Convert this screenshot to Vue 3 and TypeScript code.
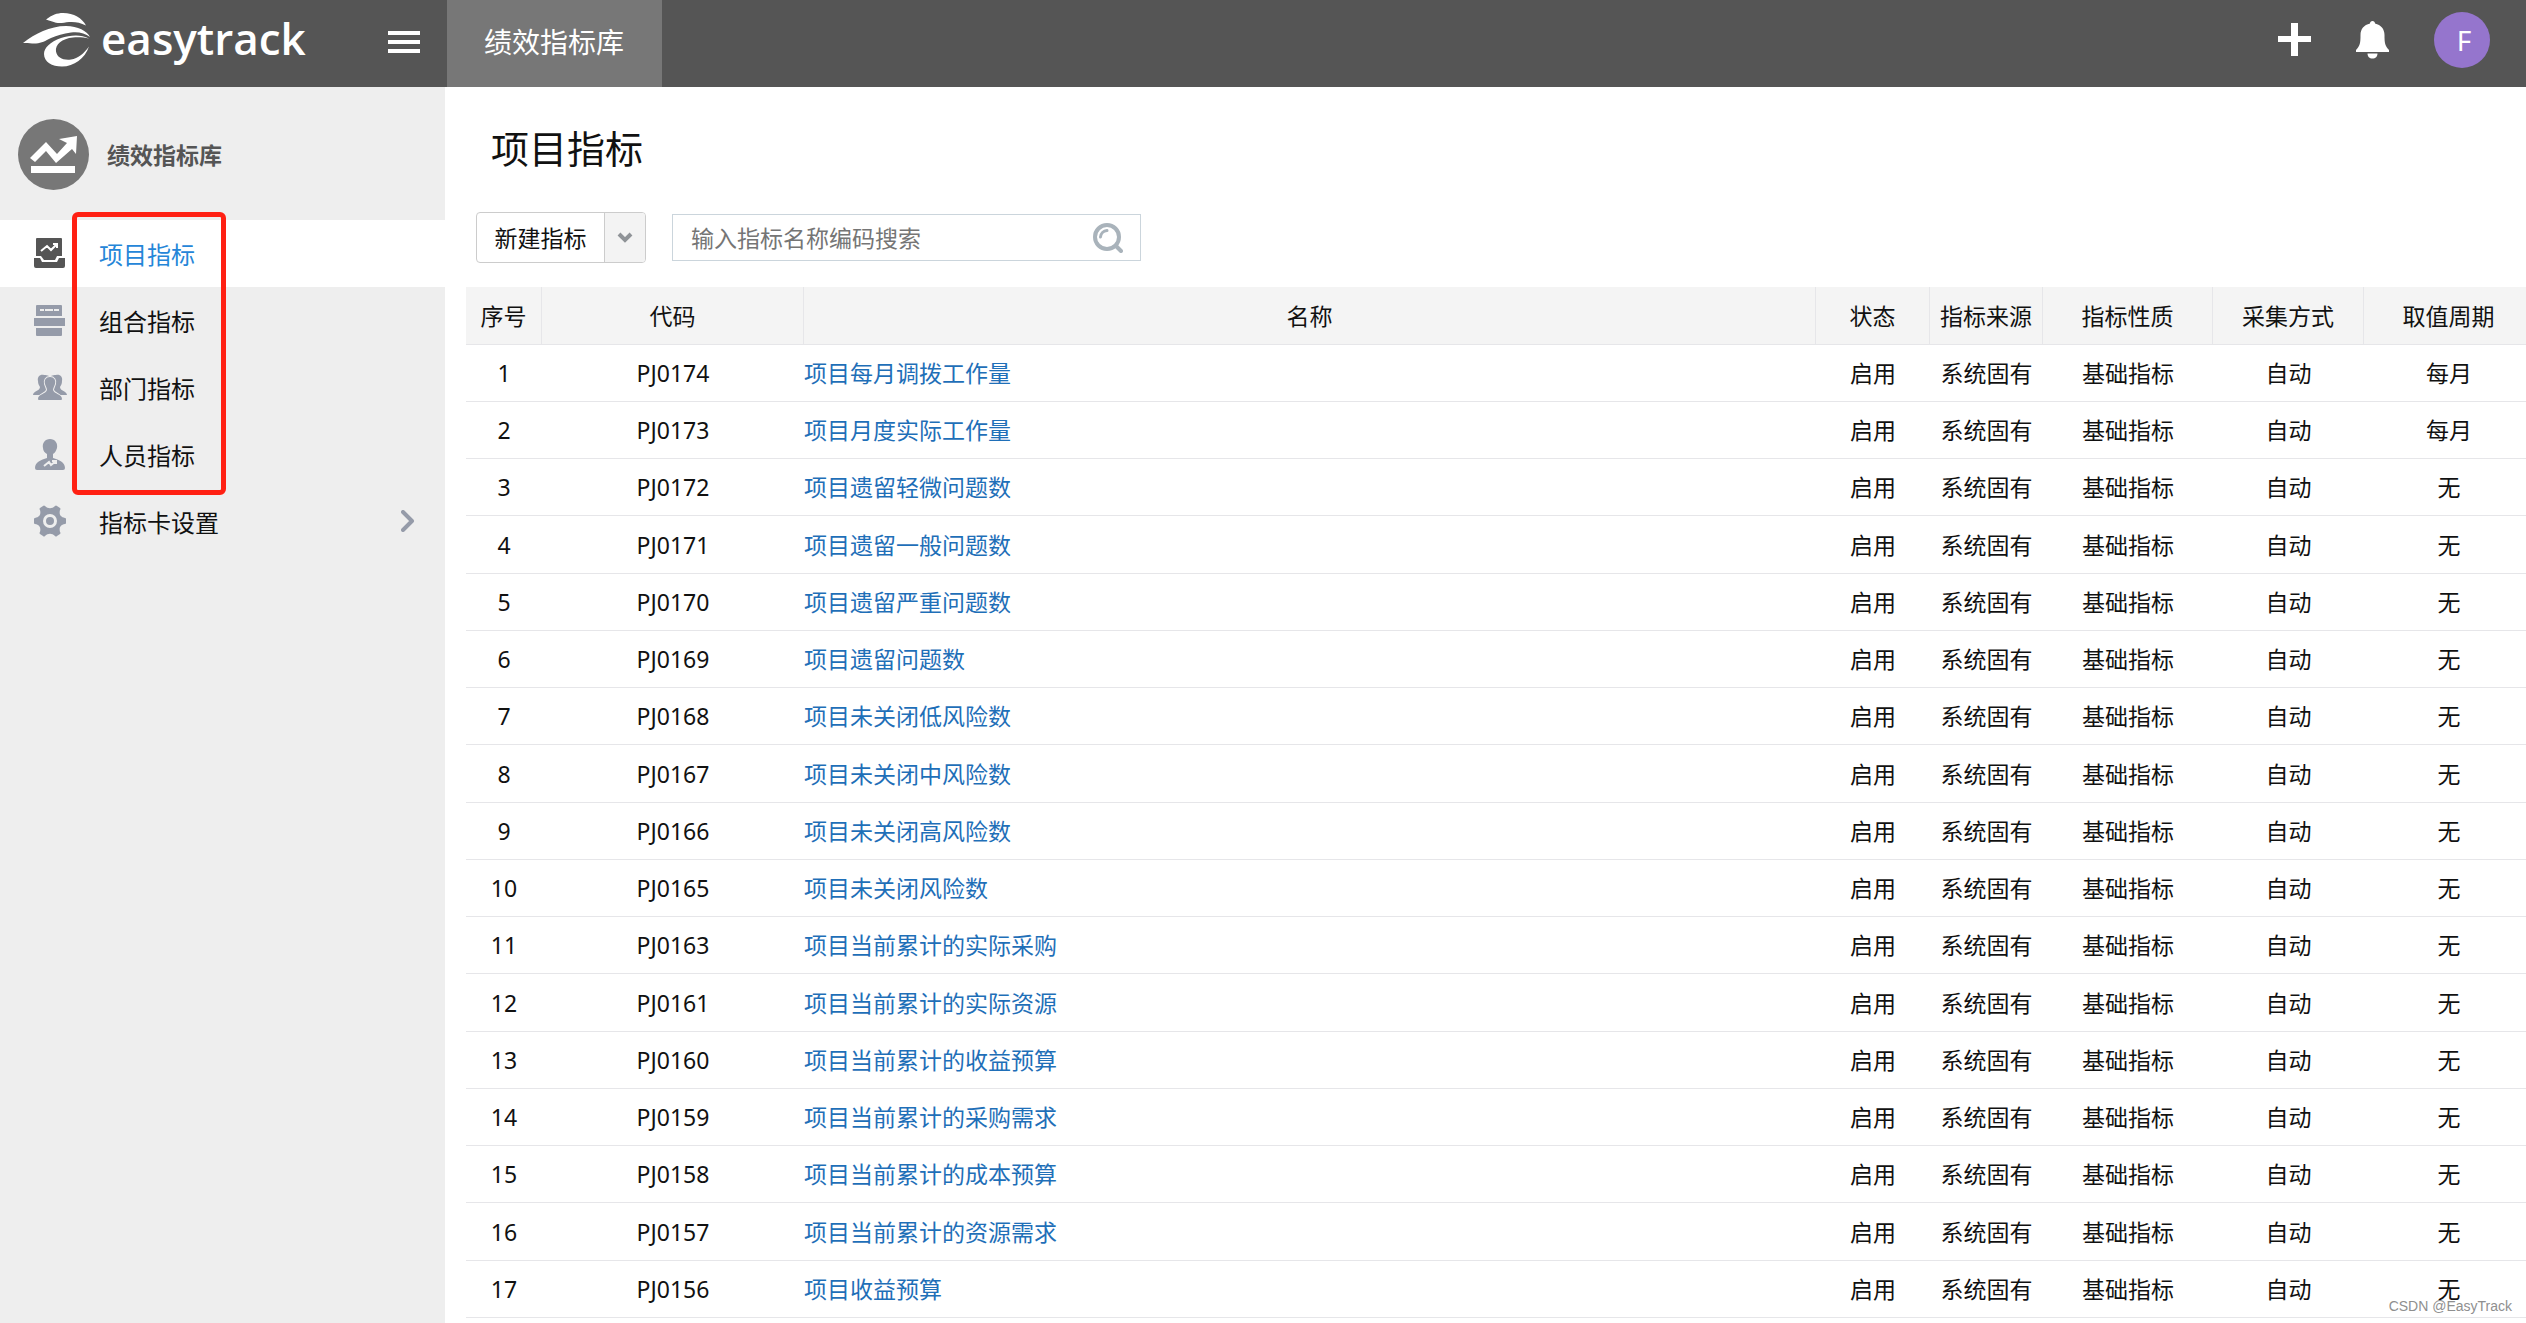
<script setup lang="ts">
import { ref } from 'vue'

interface MenuItem {
  label: string
  icon: 'project' | 'group' | 'department' | 'person' | 'settings'
  expandable?: boolean
}

interface Indicator {
  code: string
  name: string
  period: string
}

const menu: MenuItem[] = [
  { label: '项目指标', icon: 'project' },
  { label: '组合指标', icon: 'group' },
  { label: '部门指标', icon: 'department' },
  { label: '人员指标', icon: 'person' },
  { label: '指标卡设置', icon: 'settings', expandable: true },
]

const indicators: Indicator[] = [
  { code: 'PJ0174', name: '项目每月调拨工作量', period: '每月' },
  { code: 'PJ0173', name: '项目月度实际工作量', period: '每月' },
  { code: 'PJ0172', name: '项目遗留轻微问题数', period: '无' },
  { code: 'PJ0171', name: '项目遗留一般问题数', period: '无' },
  { code: 'PJ0170', name: '项目遗留严重问题数', period: '无' },
  { code: 'PJ0169', name: '项目遗留问题数', period: '无' },
  { code: 'PJ0168', name: '项目未关闭低风险数', period: '无' },
  { code: 'PJ0167', name: '项目未关闭中风险数', period: '无' },
  { code: 'PJ0166', name: '项目未关闭高风险数', period: '无' },
  { code: 'PJ0165', name: '项目未关闭风险数', period: '无' },
  { code: 'PJ0163', name: '项目当前累计的实际采购', period: '无' },
  { code: 'PJ0161', name: '项目当前累计的实际资源', period: '无' },
  { code: 'PJ0160', name: '项目当前累计的收益预算', period: '无' },
  { code: 'PJ0159', name: '项目当前累计的采购需求', period: '无' },
  { code: 'PJ0158', name: '项目当前累计的成本预算', period: '无' },
  { code: 'PJ0157', name: '项目当前累计的资源需求', period: '无' },
  { code: 'PJ0156', name: '项目收益预算', period: '无' },
]

const active = ref(0)
const keyword = ref('')
</script>

<template>
  <div class="app">
    <header class="topbar">
      <div class="brand">
        <a class="logo" href="#">
          <svg class="logo-mark" viewBox="0 0 68 54" aria-hidden="true">
            <path d="M23 6.500C29 2 34 0 40 0c11 0 19 5 23 12.500-6-3-11-4-17-3.500-5 .7-9 1.500-13 .7-3-.7-6-2-10-3.200z" />
            <path d="M0 30C6 25 13 21 20 18c7-3 15-5 23-5 12 0 21 5 24 11-5-4-12-5.500-19-4.500-8 1-14 3-20 5.500-6 3-9 5-15 5.500-5 .3-8-1-13-.5z" />
            <path d="M66 25.500C58 21 47 22 38 25c-11 4-17 10-17 16 0 8 8 12.500 18 12.500 12 0 23-8 27-20-5 7-11 12-18 13-8 1-14-2-15-8-1-7 6-13 17-14 6-.5 11 0 16 1z" />
          </svg>
          <span class="logo-text">easytrack</span>
        </a>
        <button class="icon-button" type="button" aria-label="菜单">
          <svg class="burger" viewBox="0 0 32 22" aria-hidden="true">
            <path d="M0 0h32v4H0zM0 9h32v4H0zM0 18h32v4H0z" />
          </svg>
        </button>
      </div>
      <a class="tab" href="#">绩效指标库</a>
      <div class="tools">
        <button class="icon-button" type="button" aria-label="新建">
          <svg class="plus" viewBox="0 0 33 33" aria-hidden="true">
            <path d="M13 0h7v13h13v6H20v14h-7V19H0v-6h13z" />
          </svg>
        </button>
        <button class="icon-button" type="button" aria-label="通知">
          <svg class="bell" viewBox="0 0 33 38" aria-hidden="true">
            <path d="M14 2.500C14 1 15 0 16.500 0S19 1 19 2.500C25 4 28.500 8 28.500 14c0 8 .5 11 4.500 15v2H0v-2c4-4 4.500-7 4.500-15C4.500 8 8 4 14 2.500zM11.500 32.500h10c0 3-2 5-5 5s-5-2-5-5z" />
          </svg>
        </button>
        <button class="avatar" type="button" aria-label="账户">F</button>
      </div>
    </header>

    <div class="body">
      <aside class="sidebar">
        <div class="module">
          <svg class="module-icon" viewBox="0 0 71 71" aria-hidden="true">
            <circle cx="35.500" cy="35.500" r="35.500" fill="#777" />
            <path d="M12 39l16-16 11 12 10-11-8-4 18-3-1 18-4-5-16 14-10-12-11 11z" fill="#fff" />
            <path d="M13 47h44v7H13z" fill="#fff" />
          </svg>
          <span>绩效指标库</span>
        </div>
        <nav class="menu">
          <a
            v-for="(item, i) in menu"
            :key="item.label"
            class="menu-item"
            :class="{ active: i === active }"
            href="#"
            @click.prevent="active = i"
          >
            <svg class="menu-icon" viewBox="0 0 34 34" aria-hidden="true">
              <template v-if="item.icon === 'project'">
                <path d="M4 2h24q1 0 1 1v17h-5l-2 4H11l-3-4H3V3q0-1 1-1z" />
                <path d="M1 22h6l2 4h15l2-4h6v8q0 2-2 2H3q-2 0-2-2z" />
                <path d="M8 15l6-5 4 4 6-6M20 8h4v4" fill="none" stroke="#fff" stroke-width="2" />
              </template>
              <template v-else-if="item.icon === 'group'">
                <path d="M4 2h24q1 0 1 1v10H3V3q0-1 1-1zM1 15h31v8H1zM3 25h26v7q0 1-1 1H4q-1 0-1-1z" />
                <path d="M7 7h4M12 7h8M21 7h5" stroke="#eee" stroke-width="2" />
              </template>
              <template v-else-if="item.icon === 'department'">
                <path d="M11 5c-4-1-7 2-6 6 0 3 1 4 2 6 0 4-7 4-7 8h16V6c-2-1-3-1-5-1z" />
                <path d="M23 5c4-1 7 2 6 6 0 3-1 4-2 6 0 4 7 4 7 8H18V6c2-1 3-1 5-1z" />
                <path d="M17 7c4 0 6 3 5 7-1 3-2 4-2 6 1 4 9 4 9 9q0 1-1 1H6q-1 0-1-1c0-5 8-5 9-9 0-2-1-3-2-6-1-4 1-7 5-7z" stroke="#eee" stroke-width="2" paint-order="stroke" />
              </template>
              <template v-else-if="item.icon === 'person'">
                <path d="M17 2c5 0 8 4 7 9-1 3-2 5-4 6v4c6 2 12 4 12 10q0 2-2 2H4q-2 0-2-2c0-6 6-8 12-10v-4c-2-1-4-3-4-6-1-5 2-9 7-9z" />
                <path d="M11 29l5-4 2 3 5-4M19 24h4v3" fill="none" stroke="#eee" stroke-width="2" />
              </template>
              <template v-else>
                <path fill-rule="evenodd" d="M10 2q1-1 2 0c3 3 7 3 10 0q1-1 2 0l3 2q1 1 0 2c-1 4 0 7 5 8q1 0 1 1v4q0 1-1 1c-5 1-6 4-5 8q1 1 0 2l-3 2q-1 1-2 0c-3-3-7-3-10 0q-1 1-2 0l-3-2q-1-1 0-2c1-4 0-7-5-8q-1 0-1-1v-4q0-1 1-1c5-1 6-4 5-8q-1-1 0-2zM17 10a7 7 0 1 0 0 14 7 7 0 0 0 0-14zM17 13a4 4 0 1 1 0 8 4 4 0 0 1 0-8z" />
              </template>
            </svg>
            <span class="menu-label">{{ item.label }}</span>
            <svg v-if="item.expandable" class="menu-more" viewBox="0 0 14 22" aria-hidden="true">
              <path d="M2 2l9 9-9 9" />
            </svg>
          </a>
          <div class="highlight"></div>
        </nav>
      </aside>

      <main class="content">
        <h1>项目指标</h1>
        <div class="toolbar">
          <div class="split-button">
            <button class="create" type="button">新建指标</button>
            <button class="create-more" type="button" aria-label="更多">
              <svg viewBox="0 0 16 11" aria-hidden="true"><path d="M2 2l6 6 6-6" /></svg>
            </button>
          </div>
          <form class="search" role="search" @submit.prevent>
            <input v-model="keyword" type="text" placeholder="输入指标名称编码搜索" aria-label="输入指标名称编码搜索" />
            <button class="icon-button" type="submit" aria-label="搜索">
              <svg class="magnifier" viewBox="0 0 30 30" aria-hidden="true">
                <circle cx="14" cy="14" r="12" stroke-width="4" />
                <path d="M7.500 14a7 7 0 0 1 6.500-6.500" stroke-width="3" />
                <path d="M23 23l5 5" stroke-width="4" />
              </svg>
            </button>
          </form>
        </div>

        <div class="table-wrap">
          <table>
            <colgroup>
              <col class="c-index" />
              <col class="c-code" />
              <col />
              <col class="c-state" />
              <col class="c-source" />
              <col class="c-wide" />
              <col class="c-mode" />
              <col class="c-wide" />
            </colgroup>
            <thead>
              <tr>
                <th>序号</th>
                <th>代码</th>
                <th>名称</th>
                <th>状态</th>
                <th>指标来源</th>
                <th>指标性质</th>
                <th>采集方式</th>
                <th>取值周期</th>
              </tr>
            </thead>
            <tbody>
              <tr v-for="(row, i) in indicators" :key="row.code">
                <td>{{ i + 1 }}</td>
                <td>{{ row.code }}</td>
                <td class="name"><a href="#">{{ row.name }}</a></td>
                <td>启用</td>
                <td>系统固有</td>
                <td>基础指标</td>
                <td>自动</td>
                <td>{{ row.period }}</td>
              </tr>
            </tbody>
          </table>
        </div>
      </main>
    </div>
    <div class="watermark">CSDN @EasyTrack</div>
  </div>
</template>

<style>
body {
  overflow: hidden;
}
</style>

<style scoped>
.app {
  position: relative;
  display: flex;
  flex-direction: column;
  height: 100vh;
  overflow: hidden;
  background: #fff;
  color: #111;
  font-family: 'Noto Sans', 'Noto Sans CJK SC', sans-serif;
  font-size: 23px;
  line-height: 32px;
}

a {
  text-decoration: none;
}

button,
input {
  padding: 0;
  border: 0;
  background: none;
  color: inherit;
  font: inherit;
}

svg {
  display: block;
  flex: none;
}

.icon-button {
  display: flex;
}

/* top bar */
.topbar {
  display: flex;
  flex: none;
  height: 87px;
  background: #555;
  color: #fff;
}

.brand {
  box-sizing: border-box;
  display: flex;
  align-items: center;
  justify-content: space-between;
  width: 447px;
  padding: 0 27px 4px 23px;
}

.logo {
  display: flex;
  align-items: center;
  gap: 10px;
  padding-bottom: 4px;
  color: #fff;
}

.logo-mark {
  width: 68px;
  height: 54px;
  fill: #fff;
}

.logo-text {
  padding-bottom: 4px;
  font-family: 'Open Sans', 'Noto Sans', sans-serif;
  font-size: 44px;
  font-weight: 600;
  line-height: 60px;
}

.burger {
  width: 32px;
  height: 22px;
  fill: #fff;
}

.tab {
  box-sizing: border-box;
  display: flex;
  align-items: center;
  padding: 0 38px 4px 37px;
  background: #777;
  color: #fff;
  font-size: 28px;
}

.tools {
  display: flex;
  align-items: center;
  gap: 45px;
  margin-left: auto;
  padding: 0 36px 8px 0;
}

.plus {
  width: 33px;
  height: 33px;
  fill: #fff;
}

.bell {
  width: 33px;
  height: 38px;
  fill: #fff;
}

.avatar {
  width: 56px;
  height: 56px;
  padding-left: 4px;
  border-radius: 50%;
  background: #9575cd;
  color: #fff;
  font-size: 28px;
}

/* layout below the bar */
.body {
  display: flex;
  flex: 1;
  min-height: 0;
}

.sidebar {
  flex: none;
  width: 445px;
  background: #eee;
}

.module {
  box-sizing: border-box;
  display: flex;
  align-items: center;
  gap: 18px;
  height: 133px;
  padding: 2px 0 0 18px;
  color: #555;
  font-weight: 700;
}

.module-icon {
  width: 71px;
  height: 71px;
}

.menu {
  position: relative;
  display: flex;
  flex-direction: column;
}

.menu-item {
  box-sizing: border-box;
  display: flex;
  align-items: center;
  height: 67px;
  padding: 2px 30px 0 33px;
  color: #111;
  font-size: 24px;
}

.menu-item.active {
  background: #fff;
  color: #2586d8;
}

.menu-icon {
  width: 34px;
  height: 34px;
  margin: 0 32px 4px 0;
  fill: #959ba9;
}

.active .menu-icon {
  fill: #555;
}

.menu-more {
  width: 14px;
  height: 22px;
  margin: 0 0 4px auto;
  fill: none;
  stroke: #959ba9;
  stroke-width: 4;
  stroke-linecap: round;
  stroke-linejoin: round;
}

/* red frame laid over the first four menu labels */
.highlight {
  position: absolute;
  top: -8px;
  left: 72px;
  box-sizing: border-box;
  width: 154px;
  height: 283px;
  border: 5px solid #ff2013;
  border-radius: 6px;
  pointer-events: none;
}

.content {
  flex: 1;
  min-width: 0;
  padding-left: 21px;
}

h1 {
  margin: 0;
  padding: 33px 0 36px 25px;
  font-size: 38px;
  font-weight: 400;
  line-height: 56px;
}

.toolbar {
  display: flex;
  align-items: center;
  gap: 26px;
  padding: 0 0 24px 10px;
}

.split-button {
  box-sizing: border-box;
  display: flex;
  width: 170px;
  height: 51px;
  overflow: hidden;
  border: 1px solid #ccc;
  border-radius: 4px;
}

.create {
  flex: 1;
}

.create-more {
  display: flex;
  align-items: center;
  justify-content: center;
  width: 41px;
  border-left: 1px solid #ccc;
  background: #f3f3f3;
}

.create-more svg {
  width: 16px;
  height: 11px;
  fill: none;
  stroke: #8f9397;
  stroke-width: 4;
}

.search {
  box-sizing: border-box;
  display: flex;
  align-items: center;
  width: 469px;
  height: 47px;
  padding: 0 17px 0 18px;
  border: 1px solid #cbd5dc;
}

.search input {
  flex: 1;
  min-width: 0;
  height: 40px;
  outline: 0;
}

.search input::placeholder {
  color: #757575;
}

.magnifier {
  width: 30px;
  height: 30px;
  fill: none;
  stroke: #a9b3bb;
  stroke-linecap: round;
}

/* data table; its last column runs a little past the window edge */
.table-wrap {
  overflow: hidden;
}

table {
  width: calc(100% + 8px);
  border-collapse: separate;
  border-spacing: 0;
  table-layout: fixed;
}

.c-index {
  width: 76px;
}

.c-code {
  width: 262px;
}

.c-state {
  width: 114px;
}

.c-source {
  width: 113px;
}

.c-wide {
  width: 170px;
}

.c-mode {
  width: 151px;
}

th,
td {
  box-sizing: border-box;
  height: 57px;
  padding: 0;
  border-bottom: 1px solid #e6e6e9;
  font-weight: 400;
  text-align: center;
  white-space: nowrap;
}

th {
  height: 58px;
  border-right: 1px solid #e6e6e9;
  background: #f4f4f4;
}

tbody tr:nth-child(4n) td {
  height: 58px;
}

td.name {
  text-align: left;
}

.name a {
  color: #1f6fb8;
}

.watermark {
  position: absolute;
  right: 14px;
  bottom: 7px;
  color: #8f8f8f;
  font-family: 'Liberation Sans', Arial, sans-serif;
  font-size: 14px;
  line-height: 20px;
}
</style>
